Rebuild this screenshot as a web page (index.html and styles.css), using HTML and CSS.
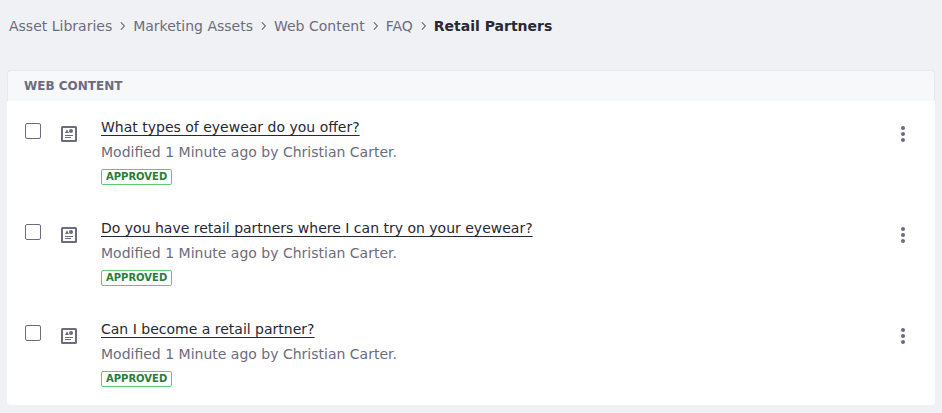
FILE: index.html
```html
<!DOCTYPE html>
<html lang="en">
<head>
<meta charset="utf-8">
<title>Retail Partners</title>
<link rel="stylesheet" href="styles.css">
</head>
<body>
<svg class="sprite" width="0" height="0">
  <symbol id="chevron" viewBox="0 0 6 8"><path d="M1.2 0.6 4.4 4 1.2 7.4" fill="none" stroke="currentColor" stroke-width="1.1" stroke-linecap="round"/></symbol>
  <symbol id="web-content" viewBox="0 0 16 16">
    <path fill="currentColor" fill-rule="evenodd" d="M1.5 0h13A1.5 1.5 0 0 1 16 1.5v13a1.5 1.5 0 0 1-1.5 1.5h-13A1.5 1.5 0 0 1 0 14.5v-13A1.5 1.5 0 0 1 1.5 0zM2 2v12h12V2z"/>
    <path fill="currentColor" d="M4 7 6 3.3 8 7zM4 9h8v1H4zM4 11h6v1H4z"/>
    <circle cx="10" cy="5" r="2" fill="currentColor"/>
  </symbol>
  <symbol id="kebab" viewBox="0 0 4 16"><circle cx="2" cy="2" r="2"/><circle cx="2" cy="8" r="2"/><circle cx="2" cy="14" r="2"/></symbol>
</svg>
<nav class="breadcrumb">
  <a>Asset Libraries</a><svg class="chevron"><use href="#chevron"/></svg>
  <a>Marketing Assets</a><svg class="chevron"><use href="#chevron"/></svg>
  <a>Web Content</a><svg class="chevron"><use href="#chevron"/></svg>
  <a>FAQ</a><svg class="chevron"><use href="#chevron"/></svg>
  <strong>Retail Partners</strong>
</nav>
<main class="panel">
  <h2 class="panel-header">WEB CONTENT</h2>
  <ul class="list">
    <li class="item">
      <span class="checkbox"></span><svg class="type-icon"><use href="#web-content"/></svg>
      <div class="details"><a class="title">What types of eyewear do you offer?</a><p class="meta">Modified 1 Minute ago by Christian Carter.</p><span class="label">APPROVED</span></div>
      <svg class="kebab"><use href="#kebab"/></svg>
    </li>
    <li class="item">
      <span class="checkbox"></span><svg class="type-icon"><use href="#web-content"/></svg>
      <div class="details"><a class="title">Do you have retail partners where I can try on your eyewear?</a><p class="meta">Modified 1 Minute ago by Christian Carter.</p><span class="label">APPROVED</span></div>
      <svg class="kebab"><use href="#kebab"/></svg>
    </li>
    <li class="item">
      <span class="checkbox"></span><svg class="type-icon"><use href="#web-content"/></svg>
      <div class="details"><a class="title">Can I become a retail partner?</a><p class="meta">Modified 1 Minute ago by Christian Carter.</p><span class="label">APPROVED</span></div>
      <svg class="kebab"><use href="#kebab"/></svg>
    </li>
  </ul>
</main>
</body>
</html>
```

FILE: styles.css
```css
* { box-sizing: border-box; }
body { margin: 0; height: 413px; overflow: hidden; background: #f0f1f5; color: #272833; font: 14px/21px "DejaVu Sans", sans-serif; }
.sprite { display: none; }
.breadcrumb { display: flex; align-items: center; height: 70px; padding: 0 9px 18px; color: #6b6c7e; white-space: nowrap; }
.breadcrumb strong { color: #272833; }
.chevron { width: 6px; height: 8px; margin: 0 7px 0 8px; overflow: visible; }
.panel { margin: 0 7px; }
.panel-header { margin: 0; height: 31px; padding: 0 16px; border: 1px solid #e7e7ed; border-bottom: 0; border-radius: 4px 4px 0 0; background: #f7f8f9; color: #6b6c7e; font-size: 12px; line-height: 30px; }
.list { list-style: none; margin: 0; padding: 0; background: #fff; height: 304px; border-radius: 0 0 4px 4px; }
.item { display: flex; align-items: flex-start; height: 101px; padding: 16px 30px 0 18px; }
.checkbox { width: 16px; height: 16px; margin-top: 6px; border: 1px solid #6b6c7e; border-radius: 2px; background: #fff; }
.type-icon { width: 16px; height: 16px; margin: 9px 0 0 20px; color: #6b6c7e; }
.details { flex: 1; margin-left: 24px; }
.title { display: block; width: max-content; color: #272833; text-decoration: underline 1px; text-underline-offset: 3px; text-decoration-skip-ink: none; }
.meta { margin: 4px 0 6px; color: #6b6c7e; }
.label { display: block; width: max-content; height: 16px; padding: 0 4px; border: 1px solid #5aca75; border-radius: 2px; color: #287d3c; font-size: 10px; font-weight: bold; line-height: 14px; }
.kebab { width: 4px; height: 16px; margin-top: 9px; fill: #6b6c7e; }
```
